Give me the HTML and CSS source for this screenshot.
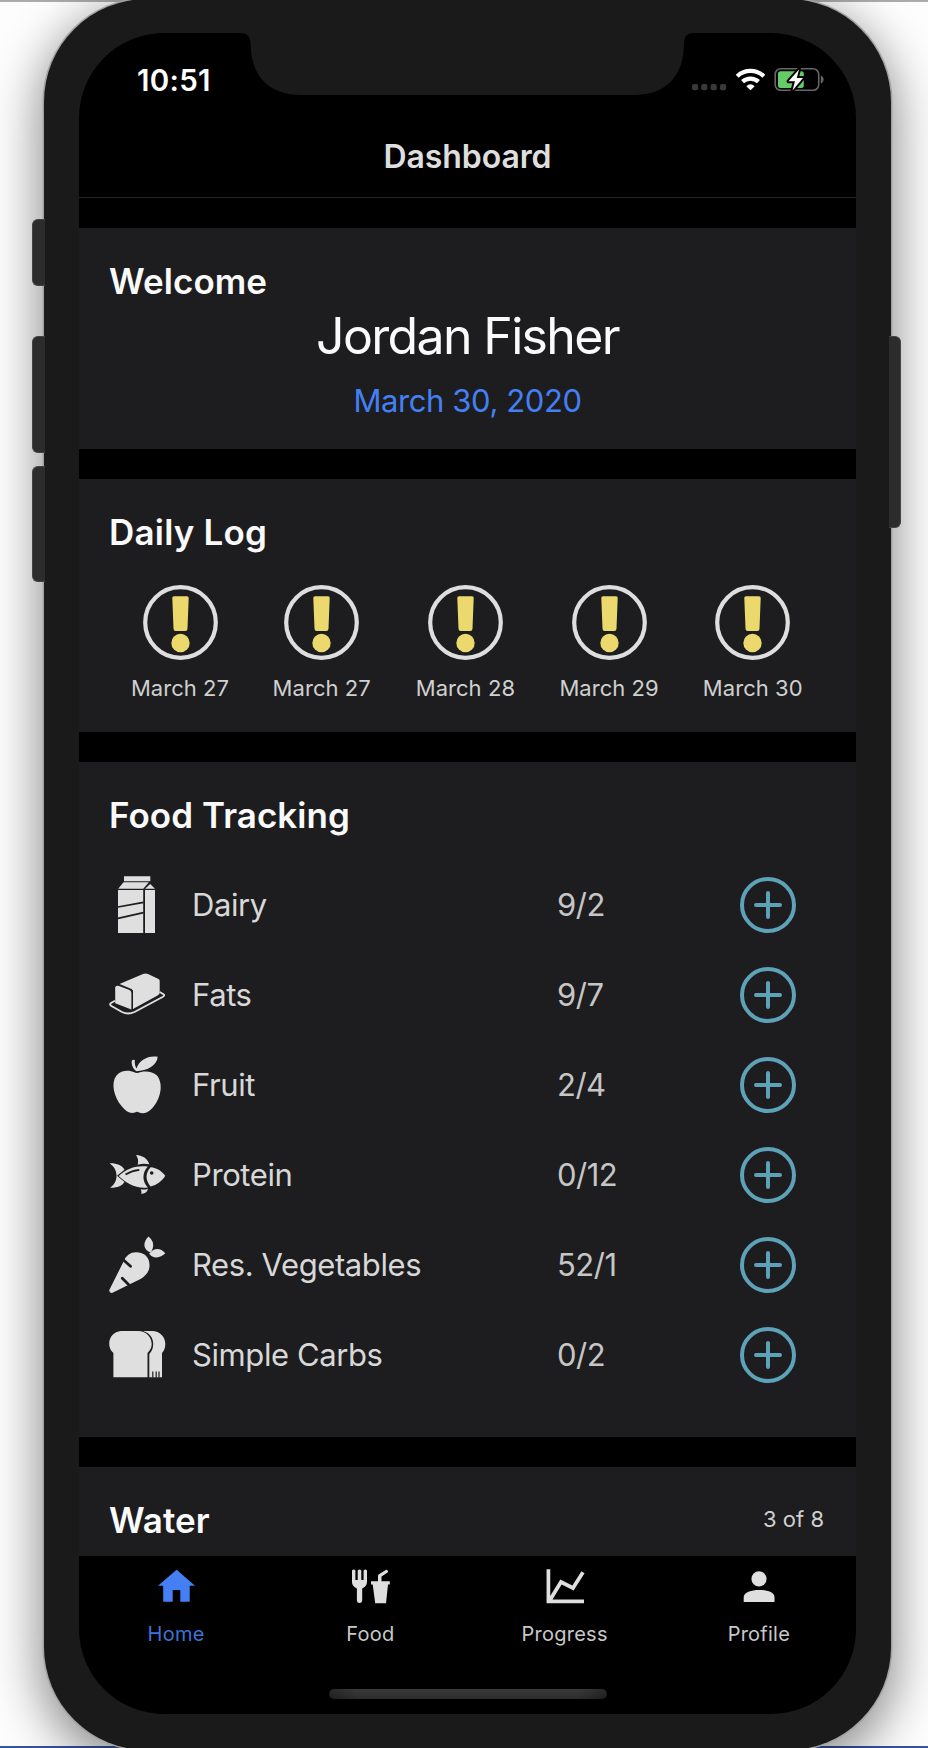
FILE: index.html
```html
<!DOCTYPE html>
<html lang="en">
<head>
<meta charset="utf-8">
<title>Dashboard</title>
<link rel="stylesheet" href="styles.css">
</head>
<body>
<svg class="defs" width="0" height="0">
  <defs>
    <symbol id="alert" viewBox="0 0 75 75">
      <circle cx="37.5" cy="37.5" r="35.3" fill="none" stroke="#dedede" stroke-width="4.2"/>
      <path d="M31 11.200H44Q45.800 11.200 45.700 13L44.500 43.500Q44.400 46 42.500 46H32.500Q30.600 46 30.500 43.500L29.300 13Q29.200 11.200 31 11.200Z" fill="#ecd96d"/>
      <circle cx="37.5" cy="58" r="9.200" fill="#ecd96d"/>
    </symbol>
    <symbol id="plus" viewBox="0 0 56 56">
      <g fill="none" stroke="#5da2b8" stroke-width="4" stroke-linecap="round"><circle cx="28" cy="28" r="26"/><path d="M28 16V40M16 28H40"/></g>
    </symbol>
  </defs>
</svg>
<main class="stage">
  <div class="phone">
    <i class="key key-mute"></i><i class="key key-up"></i><i class="key key-down"></i><i class="key key-power"></i>
    <div class="screen">
      <svg class="notch" viewBox="240 33 454 63"><path d="M240 33C248 33 250.700 37 250.700 45C251 75 268 95 301 95H634C667 95 683.500 75 684 45C684 37 686 33 694 33Z" fill="#1a1a1a"/></svg>
      <div class="status">
        <span class="time">10:51</span>
        <svg class="signals" viewBox="690 64 132 32">
          <g fill="#393939"><rect x="692" y="84" width="6.200" height="6.200" rx="2"/><rect x="701.200" y="84" width="6.200" height="6.200" rx="2"/><rect x="710.600" y="84" width="6.200" height="6.200" rx="2"/><rect x="720" y="84" width="6.200" height="6.200" rx="2"/></g>
          <g fill="none" stroke="#fff" stroke-width="4.300"><path d="M737.200 76.200A19.500 19.500 0 0 1 763.800 76.200"/><path d="M742.500 81.700A12 12 0 0 1 758.500 81.700"/></g>
          <path d="M750.500 90.300L746.300 86.200Q750.500 82.300 754.700 86.200Z" fill="#fff"/>
          <rect x="775.200" y="68.700" width="43.500" height="21.600" rx="5.500" fill="none" stroke="#666" stroke-width="1.600"/>
          <rect x="778" y="71.300" width="25.800" height="16.600" rx="2.500" fill="#65cb66"/>
          <path d="M820.800 75.300Q827 79.500 820.800 83.700Z" fill="#666"/>
          <path d="M799 69.500L788.500 81.300H795L792.500 90.500L803 78H796.800Z" fill="#fff" stroke="#000" stroke-width="4" paint-order="stroke" stroke-linejoin="round"/>
        </svg>
      </div>
      <header class="title">Dashboard</header>
      <section class="card welcome">
        <h2>Welcome</h2>
        <div class="name">Jordan Fisher</div>
        <div class="today">March 30, 2020</div>
      </section>
      <section class="card log">
        <h2>Daily Log</h2>
        <div class="days">
          <div class="day"><svg><use href="#alert"/></svg><span>March 27</span></div>
          <div class="day"><svg><use href="#alert"/></svg><span>March 27</span></div>
          <div class="day"><svg><use href="#alert"/></svg><span>March 28</span></div>
          <div class="day"><svg><use href="#alert"/></svg><span>March 29</span></div>
          <div class="day"><svg><use href="#alert"/></svg><span>March 30</span></div>
        </div>
      </section>
      <section class="card food">
        <h2>Food Tracking</h2>
        <div class="row">
          <svg class="pic" viewBox="0 0 56 56"><g fill="#dedfde"><path d="M15-.7H41.300V4.200H15ZM14.500 5.300H39.800L34.300 11.800H9.200ZM41.200 7L46 11.800H36ZM9 13H34.200V56H9ZM36 13H46V56H36Z"/></g><path d="M9 30L34.500 25.300M9 41.300L34.500 35.600" stroke="#1d1d1f" stroke-width="1.700"/></svg>
          <span>Dairy</span><span class="count">9/2</span><svg class="plus"><use href="#plus"/></svg>
        </div>
        <div class="row">
          <svg class="pic" viewBox="0 0 56 56"><g fill="#dedfde"><path d="M10.500 17L34 7Q36.500 6 39 7L49.500 12Q50.700 12.700 50.700 14V25.500Q50.700 27.300 49 28.200L24 42V23.500L22.500 22Z"/><path d="M6.200 20Q7.500 18.200 10 19L20.500 23Q22.400 24 22.400 26V42.600L6.200 36.200Z"/></g><path d="M6 33.700L2 36Q.2 37.300 2 38.700L13 45Q19 48 25.500 45L53.500 30Q56.300 28.300 54.500 27.200L50.700 25" fill="none" stroke="#dedfde" stroke-width="1.900"/></svg>
          <span>Fats</span><span class="count">9/7</span><svg class="plus"><use href="#plus"/></svg>
        </div>
        <div class="row">
          <svg class="pic" viewBox="0 0 56 56"><path d="M27.500 14.200C23.500 11.500 22.300 7.500 22.800 3.500Q24.300 2.500 25.800 3C25.500 6.500 26.200 9.500 27.500 11.500C30 3 39.500-2 48.700-.2C48 9 37.500 14 27.500 14.200ZM28.500 16C33 14 43 13.300 48 18.500C55.500 28 50.500 44 43 51.500C37.500 57 33.500 56.500 30 55.500Q28 54 26 55.500C21 57 17 54.500 12.500 49C5 40 1.500 26 7.500 18.500C12 12.800 20 13 24 14.800Q26.500 16 28.500 16Z" fill="#dedfde"/></svg>
          <span>Fruit</span><span class="count">2/4</span><svg class="plus"><use href="#plus"/></svg>
        </div>
        <div class="row">
          <svg class="pic" viewBox="0 0 56 56"><g fill="#dedfde"><path d="M.6 16.300C7 16 13 18 15.500 22.700L8 28.700L15.500 35C13 39 8 41 1.200 40.700C6 37 7.500 33 7.500 28.700C7.500 24 5.500 20 .6 16.300Z"/><path d="M27 8C34 8.500 39 12 40.300 17.300Q34 16.200 28.700 17.700C29.800 14 29 11 27 8Z"/><path d="M31.700 42.200Q35.500 43.200 39 41.700Q38 46.700 32 46.700Q33 44.500 31.700 42.200Z"/><path d="M9.700 29C18 21 28 18 38.800 19.500C33 26 33 34 38.800 40.500C27 42 17 36 9.700 29Z"/><path d="M41.500 20.300C48 20.800 53 24.500 56.300 28.800C53 34 48 38 41.500 39.600C36.200 33 36.200 26.500 41.500 20.300Z"/></g><path d="M16.500 27.500Q23 23.500 30.300 22.800" fill="none" stroke="#1d1d1f" stroke-width="1.800"/><circle cx="42.700" cy="26" r="1.800" fill="#1d1d1f"/></svg>
          <span>Protein</span><span class="count">0/12</span><svg class="plus"><use href="#plus"/></svg>
        </div>
        <div class="row">
          <svg class="pic" viewBox="0 0 56 56"><g fill="#dedfde"><path d="M.3 53L14.300 25Q18 15.200 27 15.200C36 15.200 41 21 40.500 29C40.200 35 36.500 39 31.500 42L3 56Q0 56.300.3 53Z"/><path d="M39.500-.5C45 4 45.700 10 41.500 15.500C34 13 33.500 5 39.500-.5Z"/><path d="M41 16C45 10.500 52 11 56.300 16.300C51 22 43.500 21.500 40 16.500Z"/></g><path d="M14.500 23L21.500 29.300M13.300 41.300L20.500 48.500" stroke="#1d1d1f" stroke-width="2.800" stroke-linecap="round"/></svg>
          <span>Res. Vegetables</span><span class="count">52/1</span><svg class="plus"><use href="#plus"/></svg>
        </div>
        <div class="row">
          <svg class="pic" viewBox="0 0 56 56"><g fill="#dedfde"><path d="M12 4H29C38 4 42.700 11 42.700 17C42.700 21 41 23.500 38.500 26V50.300H4.400V26C1.500 23.500.2 20.500.2 16.500C.2 10 5 4.500 12 4Z"/><path d="M34 4H43C51 4 56.300 10 56.300 17C56.300 21 55 24 53 26V50.300H40.300V27C43 24 44.200 21 44.200 17C44.200 11 41 6 34 4Z"/></g><path d="M43.800 44.500V50.500M47.200 44.500V50.500M50 44.500V50.500" stroke="#1d1d1f" stroke-width="1.200"/></svg>
          <span>Simple Carbs</span><span class="count">0/2</span><svg class="plus"><use href="#plus"/></svg>
        </div>
      </section>
      <section class="card water"><h2>Water</h2><span>3 of 8</span></section>
      <nav class="tabs">
        <div class="tab active"><svg viewBox="0 0 46 46"><path d="M23.600 6.700L42 22.800H36.700V38.800H27.300V27H19.700V38.800H10.200V22.800H5Z" fill="#4480f4"/></svg><span>Home</span></div>
        <div class="tab"><svg viewBox="0 0 46 46"><g fill="#dedfde"><path d="M5 7.500Q6.700 5.700 8.400 7.500V17H10.700V7.500Q12.500 5.700 14.300 7.500V17H16.600V7.500Q18.300 5.700 20 7.500V19Q20 23 15.200 25.500V37.500Q15 40 12.500 40Q10 40 9.900 37.500V25.500Q5 23 5 19Z"/><path d="M24 18.200H31V13Q31 11.700 32.300 11L39.200 6.800Q40.500 6.300 41 8.500Q41 9.500 39.500 10.300L34.500 13.500V18.200H42.800V21.600H41L39 40.200H28.200L25.700 21.600H24Z"/></g></svg><span>Food</span></div>
        <div class="tab"><svg viewBox="0 0 46 46"><path d="M6.400 6.300V38.300H42M8 37L19 19L31 25L41 9.300" fill="none" stroke="#dedfde" stroke-width="3.700"/></svg><span>Progress</span></div>
        <div class="tab"><svg viewBox="0 0 46 46"><g fill="#dedfde"><circle cx="23" cy="15.800" r="7.600"/><path d="M7.700 38.900V34C7.700 24.600 38.500 24.600 38.500 34V38.900Z"/></g></svg><span>Profile</span></div>
      </nav>
      <div class="indicator"></div>
    </div>
  </div>
</main>
</body>
</html>
```

FILE: styles.css
```css
* { box-sizing: border-box; }
body { margin: 0; font-family: Inter, "Liberation Sans", sans-serif; color: #d8d8d8; }
svg { display: block; }
.defs { position: absolute; }
.stage { width: 928px; height: 1748px; overflow: hidden; background: linear-gradient(#ababab 2px, #fdfdfd 2px, #fdfdfd 1746px, #34559f 1746px); }
.phone { position: relative; width: 847px; height: 1751px; margin: -1px 0 0 44px; padding: 34px 35px 0; border-radius: 103px; background: #1a1a1a; box-shadow: 0 0 0 1.500px #a3a3a3, 0 14px 48px 6px rgba(0,0,0,.43); }
.key { position: absolute; left: -12px; width: 13px; background: #2c2c2c; border: 1px solid #444; border-right: 0; border-radius: 6px 0 0 6px; }
.key-mute { top: 220px; height: 67px; }
.key-up { top: 337px; height: 117px; }
.key-down { top: 467px; height: 116px; }
.key-power { left: auto; right: -10px; top: 337px; height: 192px; width: 12px; border: 1px solid #444; border-left: 0; border-radius: 0 6px 6px 0; }
.screen { position: relative; width: 777px; height: 1681px; border-radius: 85px; background: #000; overflow: hidden; display: flex; flex-direction: column; }
.notch { position: absolute; left: 161px; top: 0; width: 454px; height: 63px; }
.status { height: 90px; flex: none; padding: 31px 34px 0 58px; display: flex; justify-content: space-between; }
.time { font-size: 29.500px; line-height: 32px; font-weight: 600; color: #fff; letter-spacing: .3px; }
.signals { width: 132px; height: 32px; overflow: visible; }
.title { flex: none; height: 75px; padding-top: 14px; border-bottom: 1px solid #222224; text-align: center; font-size: 32px; line-height: 40px; font-weight: 600; color: #dedede; letter-spacing: -.1px; }
.card { flex: none; margin-top: 30px; padding: 29px 30px 0; background: #1d1d1f; }
.card h2 { margin: 0; font-size: 35px; line-height: 48px; font-weight: 600; color: #fafafa; letter-spacing: .05px; }
.welcome { height: 221px; text-align: center; }
.welcome h2 { text-align: left; }
.name { margin-top: 1px; font-size: 50px; line-height: 60px; color: #fafafa; letter-spacing: -1.650px; }
.today { font-size: 31px; line-height: 70px; color: #4480f4; letter-spacing: -.4px; }
.log { height: 253px; }
.log h2 { letter-spacing: .2px; }
.days { display: flex; gap: 43.700px; margin: 28.500px 0 0 21px; }
.day { flex: none; width: 100px; display: flex; flex-direction: column; align-items: center; font-size: 22px; line-height: 30px; color: #d0d0d0; white-space: nowrap; letter-spacing: .05px; }
.day:first-child { margin-right: -2px; }
.day svg { width: 75px; height: 75px; margin-bottom: 13.500px; }
.food { height: 675px; }
.food h2 { margin-bottom: 21px; }
.row { height: 90px; display: grid; grid-template-columns: 83px 365px 1fr 56px; align-items: center; padding-right: 30px; font-size: 31px; line-height: 40px; letter-spacing: -.4px; }
.pic, .plus { width: 56px; height: 56px; overflow: visible; }
.count { color: #c6c6c6; letter-spacing: -.5px; }
.water { height: 89px; display: flex; justify-content: space-between; }
.water span { font-size: 22px; line-height: 47px; color: #d0d0d0; padding-right: 2px; }
.tabs { flex: none; height: 130px; display: grid; grid-template-columns: repeat(4, 1fr); padding-top: 7px; }
.tab { display: flex; flex-direction: column; align-items: center; font-size: 20px; line-height: 30px; color: #c8c8c8; letter-spacing: .25px; }
.tab svg { width: 46px; height: 46px; margin-bottom: 10px; }
.tab.active { color: #3d73d8; }
.indicator { flex: none; width: 278px; height: 10px; margin: 3px 0 0 250px; border-radius: 5px; background: linear-gradient(90deg, rgba(0,0,0,.3), transparent 10% 90%, rgba(0,0,0,.3)), linear-gradient(#3a3a3a, #2c2c2c); }
```
